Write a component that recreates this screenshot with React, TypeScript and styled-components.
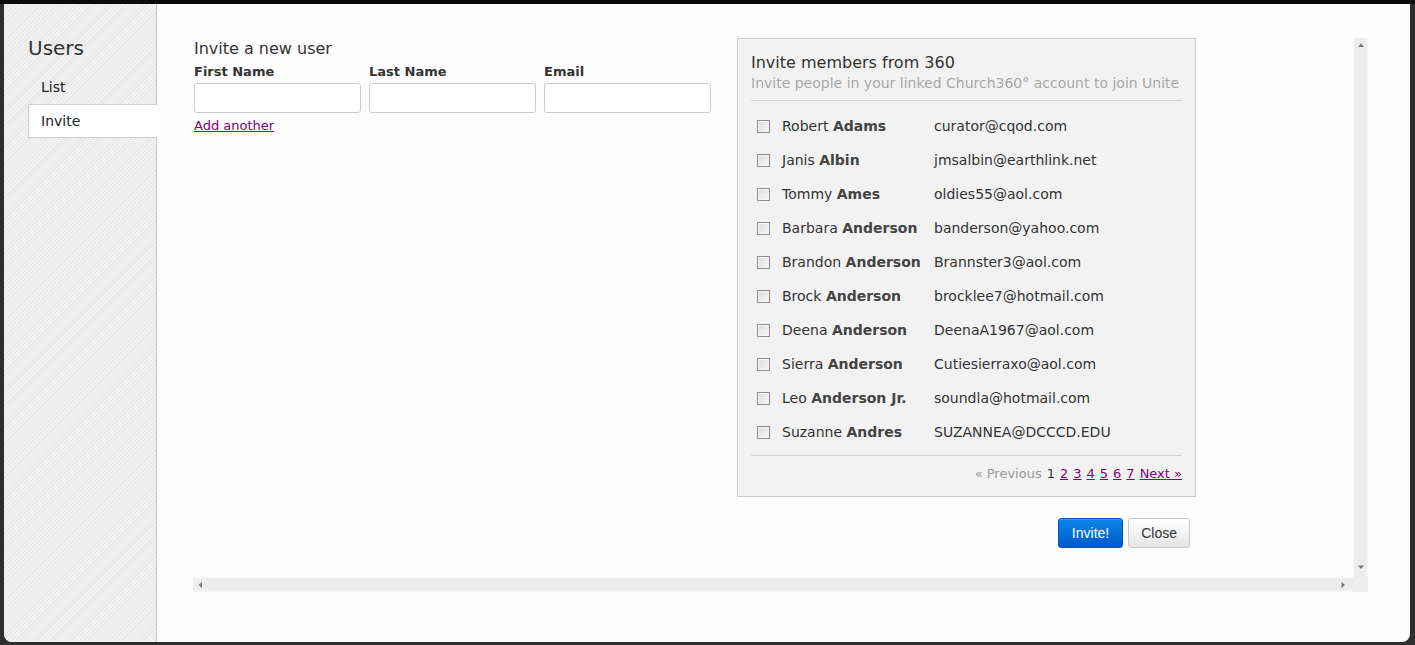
import React from "react";
import styled, { createGlobalStyle } from "styled-components";

const GlobalStyle = createGlobalStyle`
  html, body { margin: 0; padding: 0; background: #1b1b1b; }
  body { font-family: "DejaVu Sans", Verdana, sans-serif; color: #333; }
  * { box-sizing: border-box; }
`;

const Frame = styled.div`
  width: 1415px;
  height: 645px;
  padding: 4px 5px 3px 4px;
  background: linear-gradient(#0b0b0b 0 4px, #2e2e2e 4px);
`;

const Modal = styled.div`
  display: flex;
  height: 638px;
  background: #fdfdfd;
  border-radius: 0 0 8px 8px;
  overflow: hidden;
`;

const Sidebar = styled.aside`
  width: 153px;
  flex: none;
  border-right: 1px solid #c9c9c9;
  background: repeating-linear-gradient(
    135deg,
    #f1f1f1 0px,
    #f1f1f1 2px,
    #e7e7e7 2px,
    #e7e7e7 3px
  );
  padding: 32px 0 0 24px;
`;

const SideTitle = styled.h1`
  margin: 0 0 10px;
  font-size: 20px;
  line-height: 24px;
  font-weight: normal;
  color: #333;
`;

const NavList = styled.ul`
  list-style: none;
  margin: 0;
  padding: 0;
  margin-right: -1px;
`;

const NavItem = styled.li<{ $active?: boolean }>`
  height: 34px;
  display: flex;
  align-items: center;
  padding-left: 12px;
  font-size: 14px;
  color: #222;
  background: ${(p) => (p.$active ? "#fff" : "transparent")};
  border: 1px solid ${(p) => (p.$active ? "#cfcfcf" : "transparent")};
  border-right: none;
`;

const Main = styled.main`
  flex: 1;
  padding: 34px 0 0 36px;
`;

const ScrollFrame = styled.div`
  width: 1175px;
  height: 554px;
  display: grid;
  grid-template-columns: 1fr 15px;
  grid-template-rows: 1fr 15px;
  background: #fdfdfd;
`;

const Viewport = styled.div`
  overflow: hidden;
`;

const VBar = styled.div`
  display: flex;
  flex-direction: column;
  justify-content: space-between;
  align-items: center;
  background: linear-gradient(90deg, #f6f6f6 0 1px, #ececec 1px 13px, #f4f4f4 13px);
  padding: 5px 0 7px;
`;

const HBar = styled.div`
  display: flex;
  justify-content: space-between;
  align-items: center;
  background: linear-gradient(#f6f6f6 0 1px, #ececec 1px 13px, #f4f4f4 13px);
  padding: 0 7px 0 5px;
`;

const Corner = styled.div`
  background: #efefef;
`;

const Arrow = styled.svg`
  display: block;
  flex: none;
`;

const Content = styled.div`
  display: flex;
  gap: 26px;
  padding: 1px 0 0 1px;
`;

const FormCol = styled.section`
  width: 517px;
  flex: none;
`;

const FormTitle = styled.h2`
  margin: 0 0 5px;
  font-size: 16px;
  line-height: 20px;
  font-weight: normal;
  color: #333;
`;

const FieldRow = styled.div`
  display: flex;
  gap: 8px;
`;

const Field = styled.label`
  display: flex;
  flex-direction: column;
  gap: 3px;
  width: 167px;
`;

const FieldLabel = styled.span`
  font-size: 13px;
  line-height: 16px;
  font-weight: bold;
  color: #333;
`;

const TextInput = styled.input`
  width: 167px;
  height: 30px;
  border: 1px solid #cccccc;
  border-radius: 3px;
  background: #fff;
  padding: 4px 6px;
  font: inherit;
  font-size: 13px;
  outline: none;
`;

const LinkText = styled.a`
  display: inline-block;
  margin-top: 5px;
  font-size: 13px;
  line-height: 16px;
  color: #800080;
  text-decoration: underline;
  cursor: pointer;
`;

const RightCol = styled.section`
  width: 459px;
  flex: none;
  margin-top: -1px;
`;

const Panel = styled.div`
  background: #f2f2f2;
  border: 1px solid #cccccc;
  padding: 14px 13px 14px 13px;
`;

const PanelTitle = styled.h3`
  margin: 0 0 1px;
  font-size: 16px;
  line-height: 20px;
  font-weight: normal;
  color: #333;
`;

const PanelSub = styled.p`
  margin: 0;
  font-size: 14px;
  line-height: 18px;
  color: #a8a8a8;
  padding-bottom: 8px;
  border-bottom: 1px solid #d4d4d4;
  white-space: nowrap;
`;

const Members = styled.ul`
  list-style: none;
  margin: 8px 0 0;
  padding: 0 0 6px;
  border-bottom: 1px solid #d4d4d4;
`;

const MemberRow = styled.li`
  display: flex;
  align-items: center;
  height: 34px;
  padding-left: 6px;
  font-size: 14px;
  color: #333;
`;

const Check = styled.span`
  width: 13px;
  height: 13px;
  flex: none;
  border: 1px solid #8f8f8f;
  background: linear-gradient(135deg, #dcdcdc, #f8f8f8);
  box-shadow: inset 0 0 0 1px #f4f4f4;
  margin-right: 12px;
`;

const MemberName = styled.span`
  width: 152px;
  flex: none;
  white-space: nowrap;
  b {
    font-weight: bold;
    color: #444;
  }
`;

const MemberEmail = styled.span`
  white-space: nowrap;
`;

const Pager = styled.div`
  display: flex;
  justify-content: flex-end;
  gap: 5px;
  margin-top: 10px;
  font-size: 13px;
  line-height: 16px;
`;

const PagerText = styled.span<{ $muted?: boolean }>`
  color: ${(p) => (p.$muted ? "#999" : "#333")};
`;

const PagerLink = styled.a`
  color: #800080;
  text-decoration: underline;
  cursor: pointer;
`;

const Actions = styled.div`
  display: flex;
  justify-content: flex-end;
  gap: 5px;
  margin-top: 21px;
  padding-right: 6px;
`;

const Button = styled.button<{ $primary?: boolean }>`
  height: 30px;
  padding: 0 ${(p) => (p.$primary ? "13px" : "12px")};
  border-radius: 3px;
  font-family: "Liberation Sans", Arial, sans-serif;
  font-size: 14px;
  cursor: pointer;
  color: ${(p) => (p.$primary ? "#fff" : "#333")};
  border: 1px solid ${(p) => (p.$primary ? "#0058b8" : "#c8c8c8")};
  background: ${(p) =>
    p.$primary
      ? "linear-gradient(#0a86e6, #0058cc)"
      : "linear-gradient(#ffffff, #e4e4e4)"};
  box-shadow: ${(p) =>
    p.$primary ? "inset 0 1px 0 rgba(255,255,255,0.2)" : "inset 0 1px 0 #fff"};
`;

const members: [string, string, string][] = [
  ["Robert", "Adams", "curator@cqod.com"],
  ["Janis", "Albin", "jmsalbin@earthlink.net"],
  ["Tommy", "Ames", "oldies55@aol.com"],
  ["Barbara", "Anderson", "banderson@yahoo.com"],
  ["Brandon", "Anderson", "Brannster3@aol.com"],
  ["Brock", "Anderson", "brocklee7@hotmail.com"],
  ["Deena", "Anderson", "DeenaA1967@aol.com"],
  ["Sierra", "Anderson", "Cutiesierraxo@aol.com"],
  ["Leo", "Anderson Jr.", "soundla@hotmail.com"],
  ["Suzanne", "Andres", "SUZANNEA@DCCCD.EDU"],
];

const arrowPoints: Record<string, string> = {
  up: "0,4 3,0.5 6,4",
  down: "0,0.5 3,4 6,0.5",
  left: "4,0 0.5,3 4,6",
  right: "0.5,0 4,3 0.5,6",
};

function ScrollArrow({ dir }: { dir: "up" | "down" | "left" | "right" }) {
  const vertical = dir === "up" || dir === "down";
  return (
    <Arrow
      width={vertical ? 6 : 5}
      height={vertical ? 5 : 6}
      viewBox={vertical ? "0 0 6 5" : "0 0 5 6"}
    >
      <polygon points={arrowPoints[dir]} fill="#777" />
    </Arrow>
  );
}

export default function App() {
  return (
    <>
      <GlobalStyle />
      <Frame>
        <Modal>
          <Sidebar>
            <SideTitle>Users</SideTitle>
            <NavList>
              <NavItem>List</NavItem>
              <NavItem $active>Invite</NavItem>
            </NavList>
          </Sidebar>
          <Main>
            <ScrollFrame>
              <Viewport>
                <Content>
                  <FormCol>
                    <FormTitle>Invite a new user</FormTitle>
                    <FieldRow>
                      <Field>
                        <FieldLabel>First Name</FieldLabel>
                        <TextInput type="text" />
                      </Field>
                      <Field>
                        <FieldLabel>Last Name</FieldLabel>
                        <TextInput type="text" />
                      </Field>
                      <Field>
                        <FieldLabel>Email</FieldLabel>
                        <TextInput type="text" />
                      </Field>
                    </FieldRow>
                    <LinkText>Add another</LinkText>
                  </FormCol>
                  <RightCol>
                    <Panel>
                      <PanelTitle>Invite members from 360</PanelTitle>
                      <PanelSub>
                        Invite people in your linked Church360° account to join Unite
                      </PanelSub>
                      <Members>
                        {members.map(([first, last, email]) => (
                          <MemberRow key={email}>
                            <Check />
                            <MemberName>
                              {first} <b>{last}</b>
                            </MemberName>
                            <MemberEmail>{email}</MemberEmail>
                          </MemberRow>
                        ))}
                      </Members>
                      <Pager>
                        <PagerText $muted>« Previous</PagerText>
                        <PagerText>1</PagerText>
                        {[2, 3, 4, 5, 6, 7].map((n) => (
                          <PagerLink key={n}>{n}</PagerLink>
                        ))}
                        <PagerLink>Next »</PagerLink>
                      </Pager>
                    </Panel>
                    <Actions>
                      <Button $primary>Invite!</Button>
                      <Button>Close</Button>
                    </Actions>
                  </RightCol>
                </Content>
              </Viewport>
              <VBar>
                <ScrollArrow dir="up" />
                <ScrollArrow dir="down" />
              </VBar>
              <HBar>
                <ScrollArrow dir="left" />
                <ScrollArrow dir="right" />
              </HBar>
              <Corner />
            </ScrollFrame>
          </Main>
        </Modal>
      </Frame>
    </>
  );
}
